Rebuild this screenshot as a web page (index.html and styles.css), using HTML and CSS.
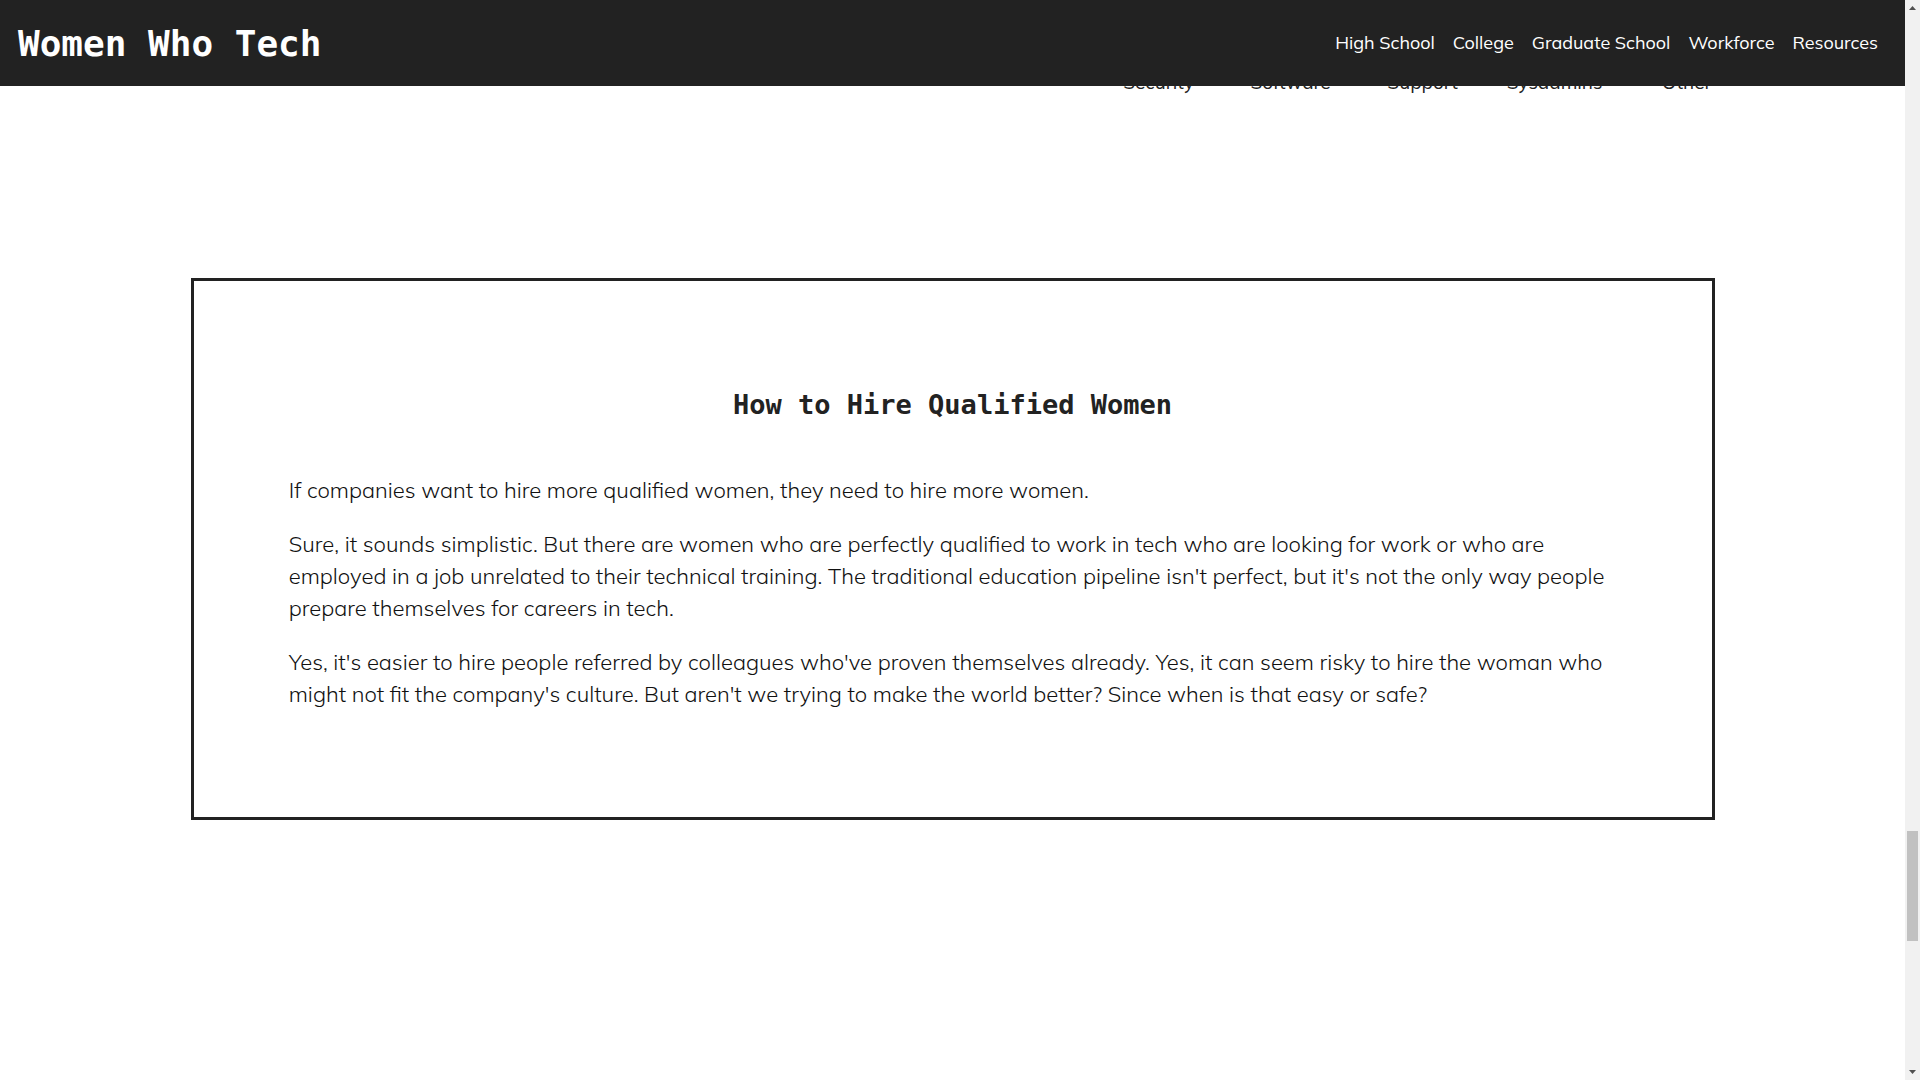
FILE: index.html
```html
<!DOCTYPE html>
<html lang="en">
<head>
<meta charset="utf-8">
<meta name="viewport" content="width=device-width, initial-scale=1">
<title>Women Who Tech</title>
<link rel="stylesheet" href="styles.css">
</head>
<body>
<div class="page">
  <header class="site-header">
    <h1 class="site-title">Women Who Tech</h1>
    <nav class="site-nav" aria-label="Sections">
      <a href="#high-school">High School</a>
      <a href="#college">College</a>
      <a href="#graduate-school">Graduate School</a>
      <a href="#workforce">Workforce</a>
      <a href="#resources">Resources</a>
    </nav>
  </header>
  <main>
    <ul class="roles">
      <li>Security</li>
      <li>Software</li>
      <li>Support</li>
      <li>Sysadmins</li>
      <li>Other</li>
    </ul>
    <section class="callout">
      <h2 class="callout-title">How to Hire Qualified Women</h2>
      <div class="callout-text">
        <p>If companies want to hire more qualified women, they need to hire more women.</p>
        <p>Sure, it sounds simplistic. But there are women who are perfectly qualified to work in tech who are looking for work or who are employed in a job unrelated to their technical training. The traditional education pipeline isn't perfect, but it's not the only way people prepare themselves for careers in tech.</p>
        <p>Yes, it's easier to hire people referred by colleagues who've proven themselves already. Yes, it can seem risky to hire the woman who might not fit the company's culture. But aren't we trying to make the world better? Since when is that easy or safe?</p>
      </div>
    </section>
  </main>
</div>
<div class="scrollbar" aria-hidden="true">
  <svg class="arrow" viewBox="0 0 15 17"><path d="M4 10h7L7.5 6z"/></svg>
  <div class="track"><div class="thumb"></div></div>
  <svg class="arrow" viewBox="0 0 15 17"><path d="M4 7h7l-3.500 4z"/></svg>
</div>
</body>
</html>
```
FILE: styles.css
```css
* {
  box-sizing: border-box;
}

body {
  margin: 0;
  height: 100vh;
  display: grid;
  grid-template-columns: 1fr 15px;
  overflow: hidden;
  background: #fff;
  color: #222;
  font-family: Mulish, Muli, Lato, "Open Sans", sans-serif;
  font-size: 18px;
}

.page {
  min-width: 0;
}

.site-header {
  position: fixed;
  top: 0;
  left: 0;
  right: 15px;
  display: flex;
  align-items: center;
  justify-content: space-between;
  height: 86px;
  padding: 0 27px 0 18px;
  background: #222;
  color: #fff;
}

.site-title {
  margin: 0;
  font: bold 36px "DejaVu Sans Mono", monospace;
}

.site-nav {
  display: flex;
  gap: 18px;
  padding-bottom: 2px;
}

.site-nav a {
  color: #fff;
  text-decoration: none;
}

.roles {
  display: grid;
  grid-template-columns: repeat(5, 132px);
  justify-content: end;
  margin: 0;
  padding: 68px 8% 0 0;
  list-style: none;
  font-size: 19px;
  line-height: 28px;
  text-align: center;
}

.callout {
  width: 80%;
  margin: 182px auto 0;
  padding: 96px 5% 107px;
  border: 3px solid #222;
}

.callout-title {
  margin: 0 0 41px;
  font: bold 27px/56px "DejaVu Sans Mono", monospace;
  text-align: center;
}

.callout-text {
  color: #111;
  font-size: 22px;
  font-weight: 300;
  line-height: 32px;
}

.callout-text p {
  margin: 0 0 22px;
}

.callout-text p:last-child {
  margin-bottom: 0;
}

.scrollbar {
  display: flex;
  flex-direction: column;
  background: #f1f1f1;
}

.arrow {
  width: 15px;
  height: 17px;
  fill: #505050;
}

.track {
  flex: 1;
  display: grid;
  grid-template-rows: 814fr 110fr 122fr;
  padding: 0 2px;
}

.thumb {
  grid-row: 2;
  background: #c1c1c1;
}
```
